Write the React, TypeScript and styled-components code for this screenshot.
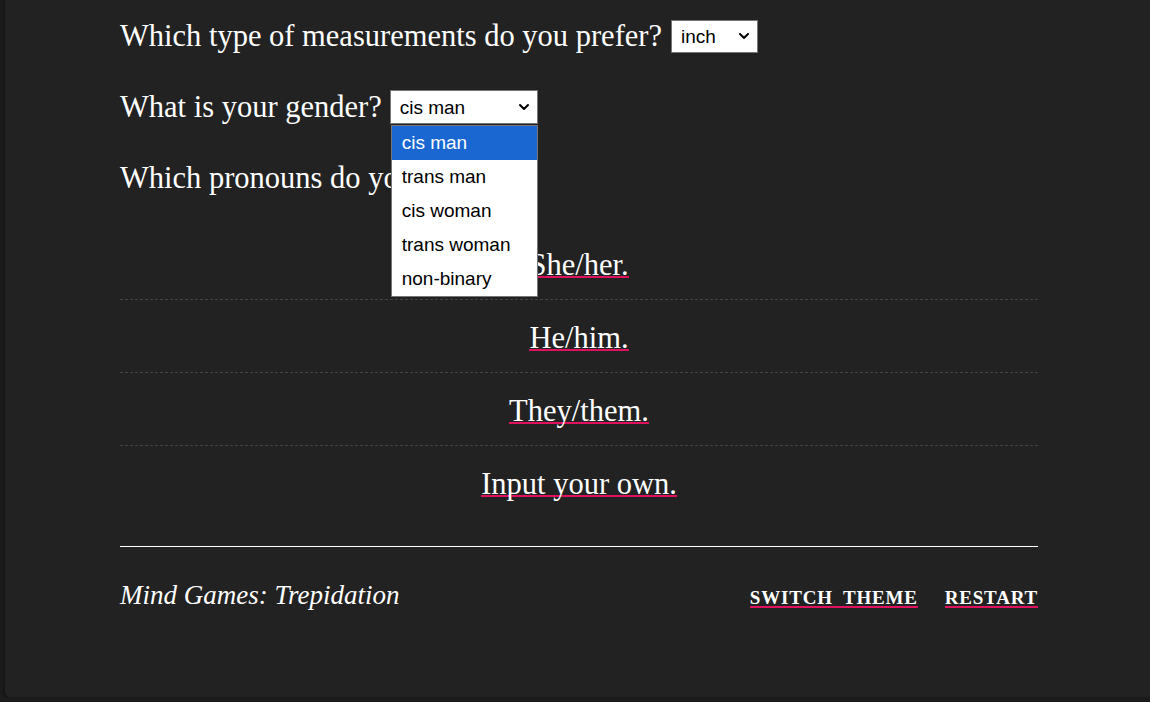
import React, { useState } from "react";
import styled, { createGlobalStyle } from "styled-components";
import { ChevronDown } from "lucide-react";

const GlobalStyle = createGlobalStyle`
  html, body {
    margin: 0;
    padding: 0;
    background: #1b1b1b;
    overflow: hidden;
  }
  * { box-sizing: border-box; }
`;

const Panel = styled.main`
  margin-left: 5px;
  width: 1160px;
  height: 697px;
  background: #222222;
  border-radius: 0 0 5px 5px;
  box-shadow: 0 2px 4px rgba(0, 0, 0, 0.5);
  padding: 17px 0 0 115px;
  color: #fff;
  font-family: "Liberation Serif", "Times New Roman", serif;
`;

const Column = styled.div`
  width: 918px;
`;

const Question = styled.p<{ $gap?: number }>`
  margin: 0;
  font-size: 30.5px;
  line-height: 38px;
  display: flex;
  align-items: center;
  gap: ${({ $gap }) => $gap ?? 8}px;
  white-space: nowrap;
  & + & {
    margin-top: 33px;
  }
`;

const SelectWrap = styled.span`
  position: relative;
  display: inline-flex;
`;

const Select = styled.select<{ $w: number; $h: number }>`
  appearance: none;
  -webkit-appearance: none;
  width: ${({ $w }) => $w}px;
  height: ${({ $h }) => $h}px;
  font-family: "Liberation Sans", Arial, sans-serif;
  font-size: 19px;
  color: #000;
  background: #fff;
  border: 1px solid #767676;
  border-radius: 0;
  padding: 0 24px 0 9px;
  outline: none;
`;

const Arrow = styled(ChevronDown)`
  position: absolute;
  right: 6px;
  top: 50%;
  transform: translateY(-50%);
  color: #000;
  pointer-events: none;
`;

const Listbox = styled.ul`
  position: absolute;
  top: calc(100% + 1px);
  left: 1px;
  width: 147px;
  margin: 0;
  padding: 0;
  list-style: none;
  background: #fff;
  border: 1px solid #767676;
  z-index: 5;
`;

const ListItem = styled.li<{ $active?: boolean }>`
  height: 34px;
  line-height: 34px;
  padding-left: 10px;
  font-family: "Liberation Sans", Arial, sans-serif;
  font-size: 19px;
  color: ${({ $active }) => ($active ? "#fff" : "#000")};
  background: ${({ $active }) => ($active ? "#1a67d2" : "#fff")};
`;

const Options = styled.ul`
  list-style: none;
  margin: 29px 0 0;
  padding: 0;
`;

const Option = styled.li`
  height: 73px;
  display: flex;
  align-items: center;
  justify-content: center;
  padding-top: 7px;
  & + & {
    border-top: 1px dashed #444;
  }
`;

const ChoiceLink = styled.a`
  font-size: 30.5px;
  line-height: 21px;
  color: #fff;
  text-decoration: none;
  border-bottom: 2px solid #e0115f;
  cursor: pointer;
`;

const Footer = styled.footer`
  margin-top: 28px;
  border-top: 1px solid #fff;
  padding-top: 33px;
  display: flex;
  align-items: baseline;
  justify-content: space-between;
`;

const Title = styled.span`
  font-style: italic;
  font-size: 27px;
`;

const Links = styled.nav`
  display: flex;
  gap: 27px;
`;

const FooterLink = styled.a`
  font-size: 19px;
  font-weight: bold;
  letter-spacing: 0.8px;
  word-spacing: 5px;
  text-transform: uppercase;
  color: #fff;
  text-decoration: none;
  border-bottom: 2px solid #e0115f;
  line-height: 16px;
  cursor: pointer;
`;

const genders = ["cis man", "trans man", "cis woman", "trans woman", "non-binary"];
const pronouns = ["She/her.", "He/him.", "They/them.", "Input your own."];

export default function App() {
  const [unit, setUnit] = useState("inch");
  const [gender, setGender] = useState("cis man");

  return (
    <>
      <GlobalStyle />
      <Panel>
        <Column>
          <Question $gap={9}>
            Which type of measurements do you prefer?
            <SelectWrap>
              <Select $w={87} $h={33} value={unit} onChange={(e) => setUnit(e.target.value)}>
                <option>inch</option>
                <option>cm</option>
              </Select>
              <Arrow size={16} strokeWidth={3} />
            </SelectWrap>
          </Question>
          <Question>
            What is your gender?
            <SelectWrap>
              <Select $w={148} $h={34} value={gender} onChange={(e) => setGender(e.target.value)}>
                {genders.map((g) => (
                  <option key={g}>{g}</option>
                ))}
              </Select>
              <Arrow size={16} strokeWidth={3} />
              <Listbox>
                {genders.map((g) => (
                  <ListItem key={g} $active={g === gender} onClick={() => setGender(g)}>
                    {g}
                  </ListItem>
                ))}
              </Listbox>
            </SelectWrap>
          </Question>
          <Question>Which pronouns do you prefer?</Question>
          <Options>
            {pronouns.map((p) => (
              <Option key={p}>
                <ChoiceLink>{p}</ChoiceLink>
              </Option>
            ))}
          </Options>
          <Footer>
            <Title>Mind Games: Trepidation</Title>
            <Links>
              <FooterLink>Switch theme</FooterLink>
              <FooterLink>Restart</FooterLink>
            </Links>
          </Footer>
        </Column>
      </Panel>
    </>
  );
}
